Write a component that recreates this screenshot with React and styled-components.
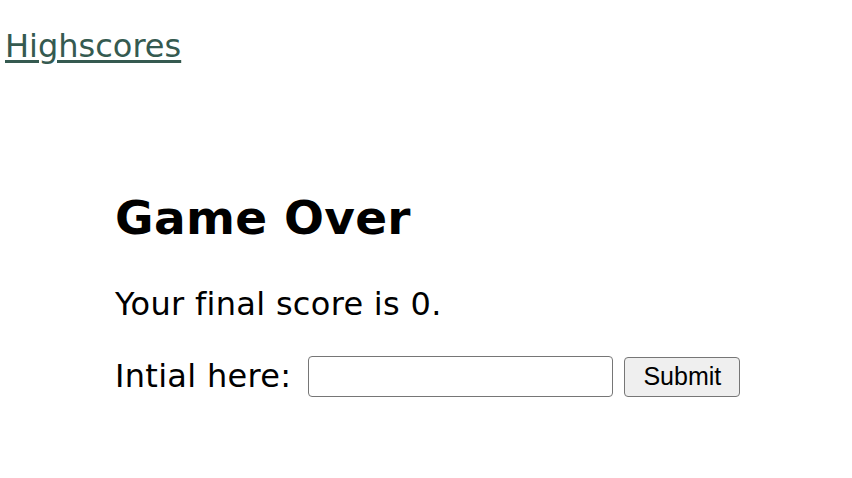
import React from 'react'
import styled, { createGlobalStyle } from 'styled-components'

const GlobalStyle = createGlobalStyle`
  body {
    margin: 0;
    background: #fff;
    font-family: 'DejaVu Sans', Verdana, sans-serif;
    color: #000;
  }
`

const Nav = styled.nav`
  padding: 27px 0 0 5px;
`
const NavLink = styled.a`
  font-size: 32px;
  line-height: normal;
  color: #355a50;
  text-decoration: underline;
  text-underline-offset: 3px;
`
const Main = styled.main`
  padding: 125px 0 0 115px;
`
const Title = styled.h1`
  margin: 0;
  font-size: 47px;
  font-weight: bold;
  letter-spacing: 0.3px;
  line-height: normal;
`
const Score = styled.p`
  margin: 40px 0 0;
  font-size: 32px;
  letter-spacing: 0.3px;
  line-height: normal;
`
const Form = styled.form`
  display: flex;
  align-items: center;
  margin-top: 33px;
`
const Label = styled.label`
  font-size: 32px;
  letter-spacing: 0.3px;
  line-height: normal;
  padding-bottom: 2px;
  margin-right: 17px;
`
const Input = styled.input`
  box-sizing: border-box;
  width: 305px;
  height: 41px;
  border: 1px solid #767676;
  border-radius: 4px;
  background: #fff;
  font-size: 24px;
  padding: 0 6px;
  margin: 0 11px 0 0;
`
const Button = styled.button`
  box-sizing: border-box;
  width: 116px;
  height: 40px;
  border: 1px solid #767676;
  border-radius: 4px;
  background: #efefef;
  font-family: 'Liberation Sans', Arial, sans-serif;
  font-size: 25px;
  color: #000;
  padding: 0;
  margin: 0;
`

const App = () => (
  <>
    <GlobalStyle />
    <Nav>
      <NavLink href='#'>Highscores</NavLink>
    </Nav>
    <Main>
      <Title>Game Over</Title>
      <Score>Your final score is 0.</Score>
      <Form onSubmit={e => e.preventDefault()}>
        <Label htmlFor='initials'>Intial here:</Label>
        <Input id='initials' type='text' />
        <Button type='submit'>Submit</Button>
      </Form>
    </Main>
  </>
)

export default App
